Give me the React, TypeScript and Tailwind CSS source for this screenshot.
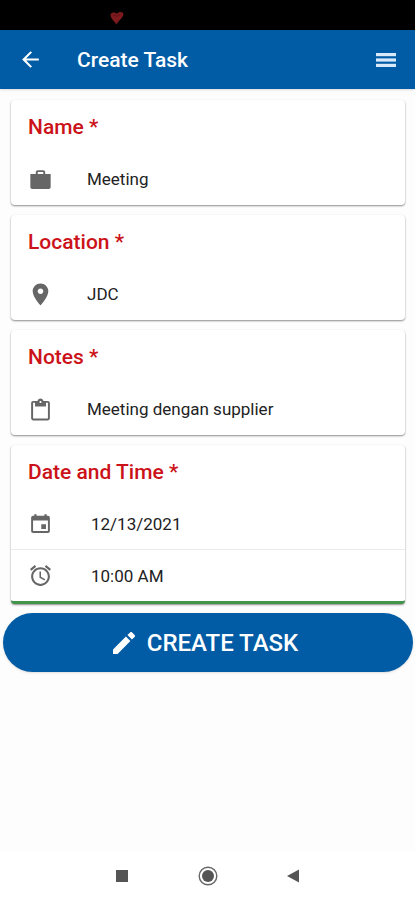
import { useState } from "react";
import type { ReactNode } from "react";
import type { IconType } from "react-icons";
import {
  IoMdAlarm,
  IoMdArrowBack,
  IoMdBriefcase,
  IoMdCalendar,
  IoMdClipboard,
  IoMdPin,
} from "react-icons/io";

const textFields = [
  { id: "name", label: "Name *", icon: IoMdBriefcase, value: "Meeting" },
  { id: "location", label: "Location *", icon: IoMdPin, value: "JDC" },
  { id: "notes", label: "Notes *", icon: IoMdClipboard, value: "Meeting dengan supplier" },
];

function StatusBar() {
  return (
    <div className="flex h-[30px] items-end bg-black pb-[5px] pl-[110px]">
      <svg viewBox="0 0 14 14" width="14" height="14" aria-hidden="true">
        <path
          d="M6.5 13.5C4.8 10.8 0.8 7.8 0.5 4C0.4 1.2 4.8 0.6 6.8 3C8.6 0.4 13.4 0.4 13.4 3.2C13.2 6.6 8.4 9.4 6.5 13.5Z"
          fill="#7d1a1d"
        />
        <path d="M3.2 4L6.8 5.2L10.4 3.6" fill="none" stroke="#5c1013" strokeWidth="0.8" />
      </svg>
    </div>
  );
}

function Header() {
  return (
    <header className="flex h-[59px] items-center bg-[#015ba5] pr-[19px] pl-[18px] text-white shadow-sm">
      <button type="button" aria-label="Back">
        <IoMdArrowBack size={25} />
      </button>
      <h1 className="ml-[34px] flex-1 text-[21px] leading-7 font-medium">Create Task</h1>
      <button type="button" aria-label="Menu">
        <svg width="20" height="20" viewBox="0 0 20 20" fill="#d9ebfb">
          <rect x="0" y="3" width="20" height="3.2" />
          <rect x="0" y="8.4" width="20" height="3.2" />
          <rect x="0" y="13.8" width="20" height="3.2" />
        </svg>
      </button>
    </header>
  );
}

function Card({ children, last }: { children: ReactNode; last?: boolean }) {
  return (
    <div
      className={`overflow-hidden rounded bg-white shadow-[0_1px_2px_rgba(0,0,0,0.45)] ${
        last ? "border-b-[3px] border-[#43934a]" : ""
      }`}
    >
      {children}
    </div>
  );
}

interface FieldRowProps {
  id: string;
  icon: IconType;
  value: string;
  indent?: boolean;
  ariaLabel?: string;
}

function FieldRow({ id, icon: Icon, value, indent, ariaLabel }: FieldRowProps) {
  const [text, setText] = useState(value);

  return (
    <div className={`flex items-center pl-[17px] ${indent ? "h-[51px]" : "h-[52px]"}`}>
      <Icon size={25} className="shrink-0 text-[#666666]" />
      <input
        id={id}
        type="text"
        aria-label={ariaLabel}
        value={text}
        onChange={(e) => setText(e.target.value)}
        className={`min-w-0 flex-1 bg-transparent text-[17px] leading-6 text-[#222222] outline-none ${
          indent ? "ml-[38px]" : "ml-[34px]"
        }`}
      />
    </div>
  );
}

export default function App() {
  return (
    <div
      className="flex min-h-screen flex-col bg-[#fdfdfd]"
      style={{ fontFamily: "Roboto, 'Liberation Sans', sans-serif" }}
    >
      <StatusBar />
      <Header />

      <form onSubmit={(e) => e.preventDefault()}>
        <div className="flex flex-col gap-[10px] pt-[11px] pr-[10px] pl-[11px]">
          {textFields.map((field) => (
            <Card key={field.id}>
              <label
                htmlFor={field.id}
                className="flex h-[53px] items-center px-[17px] pt-[2px] text-[21px] font-medium text-[#cc1219]"
              >
                {field.label}
              </label>
              <FieldRow id={field.id} icon={field.icon} value={field.value} />
            </Card>
          ))}

          <Card last>
            <h2 className="flex h-[53px] items-center px-[17px] pt-[2px] text-[21px] font-medium text-[#cc1219]">
              Date and Time *
            </h2>
            <FieldRow id="date" icon={IoMdCalendar} value="12/13/2021" ariaLabel="Date" indent />
            <div className="border-t border-[#ececec]">
              <FieldRow id="time" icon={IoMdAlarm} value="10:00 AM" ariaLabel="Time" indent />
            </div>
          </Card>
        </div>

        <div className="pt-[9px] pr-[2px] pl-[3px]">
          <button
            type="submit"
            className="flex h-[59px] w-full items-center justify-center gap-[11px] rounded-full bg-[#015ba5] pr-[6px] text-2xl font-medium text-white shadow"
          >
            <svg width="24" height="24" viewBox="0 0 24 24" fill="currentColor" aria-hidden="true">
              <path d="M1 18.6V23H5.6L18.4 10.1L13.9 5.6Z" />
              <path d="M22.6 5.9C23.2 5.3 23.2 4.5 22.6 3.9L20.1 1.4C19.5 0.8 18.7 0.8 18.1 1.4L15.4 4.1L19.9 8.6Z" />
            </svg>
            CREATE TASK
          </button>
        </div>
      </form>

      <nav className="mt-auto flex h-12 items-center justify-center gap-[66px] bg-white">
        <button type="button" aria-label="Recent apps">
          <svg width="20" height="20" viewBox="0 0 20 20">
            <rect x="4" y="4" width="12" height="12" fill="#555555" />
          </svg>
        </button>
        <button type="button" aria-label="Home">
          <svg width="20" height="20" viewBox="0 0 20 20">
            <circle cx="10" cy="10" r="8.8" fill="none" stroke="#666666" strokeWidth="1.4" />
            <circle cx="10" cy="10" r="6" fill="#555555" />
          </svg>
        </button>
        <button type="button" aria-label="Go back">
          <svg width="20" height="20" viewBox="0 0 20 20">
            <path d="M15 3.5V16.5L3 10Z" fill="#555555" />
          </svg>
        </button>
      </nav>
    </div>
  );
}
